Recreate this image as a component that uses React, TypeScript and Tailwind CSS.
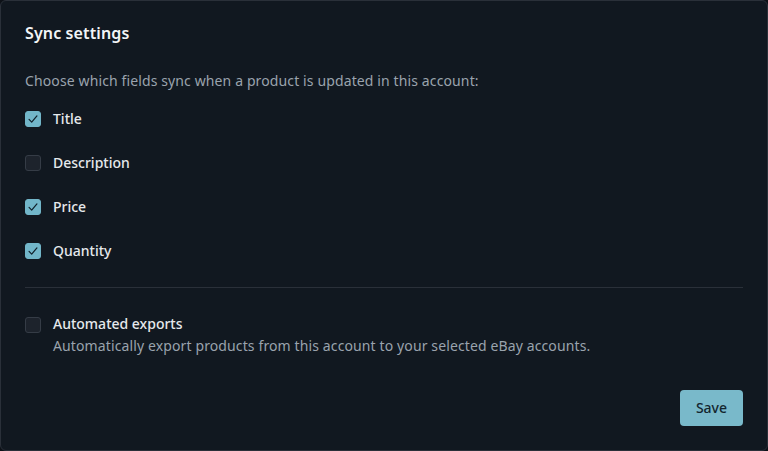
import { useState } from "react";

const FIELDS = [
  { key: "title", label: "Title" },
  { key: "description", label: "Description" },
  { key: "price", label: "Price" },
  { key: "quantity", label: "Quantity" },
];

function Checkbox({ checked, onChange }: { checked: boolean; onChange: () => void }) {
  return (
    <button
      type="button"
      onClick={onChange}
      className={
        "flex h-4 w-4 shrink-0 items-center justify-center rounded-[3px] border " +
        (checked ? "border-[#72b6c9] bg-[#72b6c9]" : "border-[#353c46] bg-[#1d232c]")
      }
    >
      {checked && (
        <svg viewBox="0 0 16 16" className="h-3.5 w-3.5" fill="none" stroke="#10202a" strokeWidth="1.4">
          <path d="M3.5 8.5l3 3 6-7" strokeLinecap="round" strokeLinejoin="round" />
        </svg>
      )}
    </button>
  );
}

export default function App() {
  const [sync, setSync] = useState<Record<string, boolean>>({
    title: true,
    description: false,
    price: true,
    quantity: true,
  });
  const [auto, setAuto] = useState(false);

  return (
    <div
      className="h-[451px] w-[768px] bg-[#0d1117] tracking-[0.12px] text-[#e6e9ec]"
      style={{ fontFamily: '"Noto Sans", sans-serif' }}
    >
      <div className="flex h-full flex-col rounded-md border border-[#2a3039] bg-[#111820] px-6 pt-5">
        <h2 className="text-base font-semibold leading-6 text-[#f3f5f7]">Sync settings</h2>

        <p className="mt-[26px] text-sm leading-5 text-[#9aa3ad]">
          Choose which fields sync when a product is updated in this account:
        </p>

        <div className="mt-[6px] flex flex-col">
          {FIELDS.map((f) => (
            <label key={f.key} className="flex h-[44px] cursor-pointer items-center gap-3">
              <Checkbox
                checked={sync[f.key]}
                onChange={() => setSync((s) => ({ ...s, [f.key]: !s[f.key] }))}
              />
              <span className="text-sm font-medium tracking-normal text-[#e6e9ec]">{f.label}</span>
            </label>
          ))}
        </div>

        <div className="mt-[14px] border-t border-[#2a3039]" />

        <div className="mt-[26px] flex gap-3">
          <div className="pt-[3px]">
            <Checkbox checked={auto} onChange={() => setAuto(!auto)} />
          </div>
          <div className="flex flex-col">
            <span className="text-sm font-medium leading-5 tracking-normal text-[#e6e9ec]">
              Automated exports
            </span>
            <span className="mt-[2px] text-sm leading-5 text-[#9aa3ad]">
              Automatically export products from this account to your selected eBay accounts.
            </span>
          </div>
        </div>

        <div className="mt-[34px] flex justify-end">
          <button
            type="button"
            className="h-9 rounded-[4px] bg-[#79b9ca] px-4 text-sm font-medium tracking-normal text-[#13262f]"
          >
            Save
          </button>
        </div>
      </div>
    </div>
  );
}
